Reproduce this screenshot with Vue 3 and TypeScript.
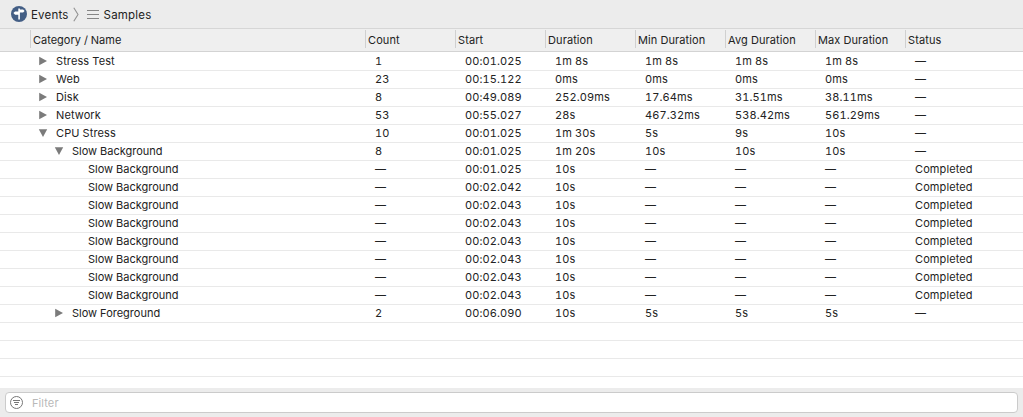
<script setup lang="ts">
interface Row {
  name: string
  depth: number
  state: 'open' | 'closed' | 'leaf'
  cells: string[]
}

const headers: string[] = ['Count', 'Start', 'Duration', 'Min Duration', 'Avg Duration', 'Max Duration', 'Status']

const samples: string[] = ['00:01.025', '00:02.042', ...Array<string>(6).fill('00:02.043')]

const rows: Row[] = [
  { name: 'Stress Test', depth: 0, state: 'closed', cells: ['1', '00:01.025', '1m 8s', '1m 8s', '1m 8s', '1m 8s', '—'] },
  { name: 'Web', depth: 0, state: 'closed', cells: ['23', '00:15.122', '0ms', '0ms', '0ms', '0ms', '—'] },
  { name: 'Disk', depth: 0, state: 'closed', cells: ['8', '00:49.089', '252.09ms', '17.64ms', '31.51ms', '38.11ms', '—'] },
  { name: 'Network', depth: 0, state: 'closed', cells: ['53', '00:55.027', '28s', '467.32ms', '538.42ms', '561.29ms', '—'] },
  { name: 'CPU Stress', depth: 0, state: 'open', cells: ['10', '00:01.025', '1m 30s', '5s', '9s', '10s', '—'] },
  { name: 'Slow Background', depth: 1, state: 'open', cells: ['8', '00:01.025', '1m 20s', '10s', '10s', '10s', '—'] },
  ...samples.map((start): Row => ({
    name: 'Slow Background',
    depth: 2,
    state: 'leaf',
    cells: ['—', start, '10s', '—', '—', '—', 'Completed'],
  })),
  { name: 'Slow Foreground', depth: 1, state: 'closed', cells: ['2', '00:06.090', '10s', '5s', '5s', '5s', '—'] },
]
</script>

<template>
  <div class="window">
    <nav class="path">
      <svg class="logo" width="16" height="16" viewBox="0 0 16 16">
        <circle cx="8" cy="8" r="8" fill="#435e85" />
        <path d="M7.3 2.4h1.6v1.1h3.2l1.5 1.5-1.5 1.5H8.9v7.1H7.3V8.7H4.1L2.4 7.1l1.7-1.6h3.2z" fill="#fff" />
      </svg>
      <span class="crumb">Events</span>
      <svg class="chevron" width="6" height="15" viewBox="0 0 6 15">
        <path d="M.8.8 5 7.5.8 14.2" fill="none" stroke="#929292" stroke-width="1.1" />
      </svg>
      <svg class="lines" width="12" height="9" viewBox="0 0 12 9">
        <path d="M0 .5h12M0 4.5h12M0 8.5h12" stroke="#858585" stroke-width="1" />
      </svg>
      <span class="crumb">Samples</span>
    </nav>
    <div class="grid head">
      <span class="lead"></span>
      <span class="title first">Category / Name</span>
      <span v-for="h in headers" :key="h" class="title">{{ h }}</span>
    </div>
    <div class="body">
      <div v-for="(row, i) in rows" :key="i" class="grid row">
        <span class="lead"></span>
        <span class="name" :class="'depth-' + row.depth">
          <svg class="arrow" width="10" height="10" viewBox="0 0 10 10">
            <path v-if="row.state === 'closed'" d="M1.2.8 9 5 1.2 9.2z" fill="#7b7b7b" />
            <path v-else-if="row.state === 'open'" d="M.8 1.2h8.4L5 9z" fill="#7b7b7b" />
          </svg>
          <span :class="{ wide: row.depth === 0 }">{{ row.name }}</span>
        </span>
        <span v-for="(cell, c) in row.cells" :key="c" class="cell">{{ cell }}</span>
      </div>
      <div v-for="n in 3" :key="'blank' + n" class="row"></div>
    </div>
    <footer class="footer">
      <div class="filter">
        <svg width="14" height="14" viewBox="0 0 14 14">
          <circle cx="6.5" cy="6.5" r="6" fill="none" stroke="#777" stroke-width="1" />
          <path d="M3 4.5h7M4 6.5h5M5 8.5h3" stroke="#777" stroke-width="1" />
        </svg>
        <span class="placeholder">Filter</span>
      </div>
    </footer>
  </div>
</template>

<style>
body {
  margin: 0;
  background: #fff;
}
</style>

<style scoped>
.window {
  display: flex;
  flex-direction: column;
  height: 417px;
  overflow: hidden;
  background: #fff;
  color: #222;
  font: 11px/17px Inter, "Liberation Sans", sans-serif;
  font-feature-settings: "tnum";
  letter-spacing: 0.1px;
  white-space: nowrap;
}
.path {
  display: flex;
  align-items: center;
  flex: none;
  box-sizing: border-box;
  height: 29px;
  padding-left: 11px;
  background: #ececec;
  border-bottom: 1px solid #d6d6d6;
}
.logo {
  margin-right: 4px;
}
.crumb {
  padding-top: 2px;
  font-size: 11.5px;
  letter-spacing: 0.2px;
}
.chevron {
  margin: 1px 8px 0 4px;
}
.lines {
  margin-top: 1px;
  margin-right: 5px;
}
.grid {
  display: grid;
  grid-template-columns: 30px 335px repeat(6, 90px) 1fr;
}
.head {
  flex: none;
  box-sizing: border-box;
  height: 23px;
  background: #efefef;
  border-bottom: 1px solid #d3d3d3;
}
.title {
  height: 18px;
  margin-top: 1px;
  padding-left: 2px;
  border-left: 1px solid #d0d0d0;
  line-height: 20px;
}
.first {
  letter-spacing: 0;
}
.body {
  flex: 1;
  padding-top: 1px;
}
.row {
  box-sizing: border-box;
  height: 18px;
  border-bottom: 1px solid #e9e9e9;
}
.name {
  display: flex;
  align-items: center;
  letter-spacing: 0;
}
.wide {
  letter-spacing: 0.1px;
}
.arrow {
  margin-right: 8px;
  margin-bottom: 2px;
}
.depth-0 {
  padding-left: 8px;
}
.depth-1 {
  padding-left: 24px;
}
.depth-2 {
  padding-left: 40px;
}
.cell {
  padding-left: 10px;
}
.footer {
  flex: none;
  box-sizing: border-box;
  height: 29px;
  padding: 4px 5px;
  background: #ececec;
}
.filter {
  display: flex;
  align-items: center;
  box-sizing: border-box;
  height: 21px;
  padding-left: 4px;
  background: #fff;
  border: 1px solid #cbcbcb;
  border-radius: 4px;
}
.placeholder {
  margin-left: 8px;
  padding-top: 1px;
  color: #b9b9b9;
}
</style>
